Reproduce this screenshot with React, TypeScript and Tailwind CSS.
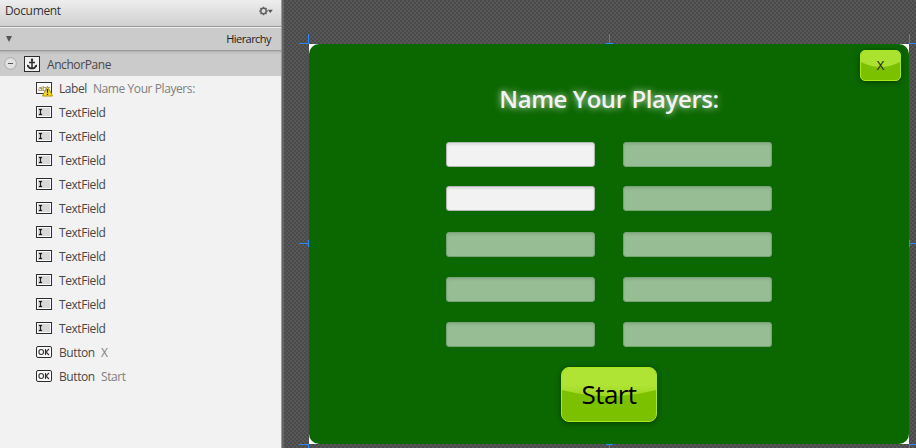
import type { ReactNode } from 'react';

const UI = "font-['Open_Sans','Noto_Sans',sans-serif]";

function AnchorIcon() {
  return (
    <svg width="16" height="16" viewBox="0 0 16 16" className="block">
      <rect x="0.5" y="0.5" width="15" height="15" fill="#f1f1f1" stroke="#2d2d2d" />
      <path d="M8 4V12.5M5 6.5h6M4 9.5c.4 2 1.800 3 4 3s3.600-1 4-3" fill="none" stroke="#2d2d2d" strokeWidth="1.500" />
      <circle cx="8" cy="3.700" r="1.200" fill="#2d2d2d" />
      <path d="M3 11V8.500L5.500 10zM13 11V8.500L10.500 10z" fill="#2d2d2d" />
    </svg>
  );
}

function LabelIcon() {
  return (
    <svg width="18" height="16" viewBox="0 0 18 16" className="block">
      <rect x="0.5" y="1.500" width="15" height="11" fill="#fafafa" stroke="#333" />
      <text x="2" y="10" fontSize="8" fill="#666" fontFamily="Open Sans" textLength="12">abc</text>
      <path d="M11.500 5.300L16.500 15H6.500z" fill="#f7dc20" stroke="#b09510" strokeWidth="1" strokeLinejoin="round" />
      <path d="M11.500 8v3.700M11.500 12.700v1.300" stroke="#302800" strokeWidth="1.300" />
    </svg>
  );
}

function FieldIcon() {
  return (
    <svg width="16" height="12" viewBox="0 0 16 12" className="block">
      <rect x="0.5" y="0.5" width="15" height="11" fill="#f8f8f8" stroke="#2d2d2d" />
      <rect x="2" y="2" width="12" height="8" fill="#d9d9d9" />
      <path d="M3 3h3v1H5v4h1v1H3V8h1V4H3z" fill="#1c1c1c" stroke="#1c1c1c" strokeWidth="0.200" />
    </svg>
  );
}

function ButtonIcon() {
  return (
    <svg width="16" height="12" viewBox="0 0 16 12" className="block">
      <rect x="0.5" y="0.5" width="15" height="11" rx="1.500" fill="#fafafa" stroke="#2d2d2d" />
      <ellipse cx="5.200" cy="6" rx="2.300" ry="2.500" fill="none" stroke="#333" strokeWidth="1.100" />
      <path d="M9.500 3v6M13 3L10 6l3 3" fill="none" stroke="#333" strokeWidth="1.200" />
    </svg>
  );
}

function GearMenu() {
  return (
    <svg width="14" height="10" viewBox="0 0 14 10" className="block">
      <circle cx="4.500" cy="5" r="2.700" fill="none" stroke="#606060" strokeWidth="1.500" />
      <g stroke="#606060" strokeWidth="1.500">
        <path d="M4.500 .7v1.300M4.500 8v1.300M.2 5h1.300M7.500 5h1.300M1.500 2l.9.900M6.600 7.100l.9.900M1.500 8l.9-.9M6.600 2.900l.9-.9" />
      </g>
      <path d="M8.800 3.800h5L11.300 7z" fill="#555" />
    </svg>
  );
}

function Row({ icon, name, detail, nameWidth }: { icon: ReactNode; name: string; detail?: string; nameWidth: string }) {
  return (
    <div className="flex h-6 items-center pl-9">
      <span className="w-[23px] shrink-0 -translate-y-px">{icon}</span>
      <span className={`${nameWidth} whitespace-nowrap text-[#484848]`}>{name}</span>
      {detail && <span className="whitespace-nowrap text-[#808080]">{detail}</span>}
    </div>
  );
}

function GlossButton({ children, className, shine }: { children: ReactNode; className: string; shine: ReactNode }) {
  return (
    <button className={`relative flex items-center justify-center overflow-hidden border border-[#a9e81c] bg-[#7cc100] ${className}`}>
      {shine}
      <span className="relative">{children}</span>
    </button>
  );
}

function Guides() {
  return (
    <svg width="634" height="448" viewBox="282 0 634 448" className="pointer-events-none absolute inset-0">
      <g fill="none" stroke="#2e86ff" strokeWidth="1">
        <path d="M299 43.500h10M308.500 34v10M299 444.500h10M308.500 444v4" />
        <path d="M299 243.500h9M308.500 240v7M606 43.500h7M609.500 34v9M606 444.500h7M609.500 444v4" />
        <path d="M909.500 34v10M909 43.500h7M909.500 448v-4M909 444.500h7M909.500 240v7M910 243.500h6" />
      </g>
    </svg>
  );
}

const rows = [
  { gap: 'mb-[19px]', on: true },
  { gap: 'mb-[21px]', on: true },
  { gap: 'mb-5', on: false },
  { gap: 'mb-5', on: false },
  { gap: 'mb-5', on: false },
];

function Field({ on }: { on: boolean }) {
  return (
    <div
      className={`h-[25px] w-[149px] rounded-[3px] border ${on ? 'border-[#b1b8b1] bg-[#f2f2f2] shadow-[inset_0_2px_2px_#dedede]' : 'border-[#77a377] bg-[#97bd95] shadow-[inset_0_2px_2px_#8bae89]'}`}
    />
  );
}

export default function App() {
  return (
    <div className={`flex h-[448px] w-[916px] overflow-hidden ${UI}`}>
      <aside className="flex w-[282px] shrink-0 flex-col border-r border-[#9a9a9a] bg-[#f2f2f2] text-[12px] tracking-[-0.42px]">
        <header className="flex h-[27px] items-center justify-between border-b border-[#999] bg-linear-to-b from-[#eeeeee] to-[#cfcfcf] pr-2 pb-[5px] pl-[5px] text-[#333]">
          <span className="tracking-[-0.35px]">Document</span>
          <GearMenu />
        </header>
        <div className="flex h-6 items-center justify-between border-b border-[#999] bg-[#cbcbcb] pr-[10px] pl-[6px] text-[#333] shadow-[inset_0_1px_0_#eee]">
          <svg width="6" height="6" viewBox="0 0 6 6"><path d="M0 0h6L3 6z" fill="#555" /></svg>
          <span className="pt-px text-[11px] tracking-[-0.55px] text-[#222]">Hierarchy</span>
        </div>
        <div className="flex h-[25px] items-center bg-[#cbcbcb] pt-[2px] pl-1 text-[#484848] shadow-[inset_0_3px_3px_-2px_#aaa]">
          <svg width="13" height="13" viewBox="0 0 13 13" className="-translate-y-px">
            <circle cx="6.500" cy="6.500" r="5.800" fill="#e2e2e2" stroke="#aaa" />
            <path d="M4 6.500h5" stroke="#555" />
          </svg>
          <span className="ml-[7px] w-[23px] -translate-y-px"><AnchorIcon /></span>
          <span>AnchorPane</span>
        </div>
        <div className="pt-px">
          <Row icon={<span className="block translate-y-px"><LabelIcon /></span>} name="Label" detail="Name Your Players:" nameWidth="w-[34px]" />
          {Array.from({ length: 10 }, (_, i) => (
            <Row key={i} icon={<FieldIcon />} name="TextField" nameWidth="w-[60px]" />
          ))}
          <Row icon={<ButtonIcon />} name="Button" detail="X" nameWidth="w-[42px]" />
          <Row icon={<ButtonIcon />} name="Button" detail="Start" nameWidth="w-[42px]" />
        </div>
      </aside>
      <main className="relative w-[634px] bg-[#505050] bg-[repeating-conic-gradient(#4a4a4a_0_25%,#575757_0_50%)] bg-size-[4px_4px] pt-11 pl-[27px] shadow-[inset_2px_0_1px_#666]">
        <div className="h-[400px] w-[600px] bg-white">
          <section className="flex h-full flex-col items-center rounded-[10px] bg-[#0b6700]">
            <div className="flex w-full justify-end pt-[6px] pr-2">
              <GlossButton
                className="h-[31px] w-[41px] rounded-[5px] text-[13px] text-[#222] shadow-[0_1px_5px_#063c00]"
                shine={<svg className="absolute inset-0" width="39" height="29" viewBox="0 0 39 29"><path d="M0 0h39v11Q19.500 21 0 11z" fill="#abe12f" /></svg>}
              >
                X
              </GlossButton>
            </div>
            <h1 className="h-9 whitespace-nowrap text-[24px] leading-9 font-semibold tracking-[-0.42px] text-[#f2f2f2] [text-shadow:0_0_7px_#d9eed9]">
              Name Your Players:
            </h1>
            <div className="mt-[25px] flex flex-col">
              {rows.map((row, i) => (
                <div key={i} className={`flex gap-7 ${row.gap}`}>
                  <Field on={row.on} />
                  <Field on={false} />
                </div>
              ))}
            </div>
            <GlossButton
              className="h-[55px] w-[96px] rounded-[8px] text-[26px] tracking-[-0.6px] text-black shadow-[0_1px_5px_#063c00]"
              shine={
                <svg className="absolute inset-0" width="94" height="53" viewBox="0 0 94 53">
                  <defs>
                    <linearGradient id="gloss" x1="0" y1="0" x2="0" y2="1">
                      <stop offset="0.600" stopColor="#afe334" />
                      <stop offset="1" stopColor="#9fd722" />
                    </linearGradient>
                  </defs>
                  <path d="M0 0h94v22Q47 34 0 22z" fill="url(#gloss)" />
                </svg>
              }
            >
              Start
            </GlossButton>
          </section>
        </div>
        <Guides />
      </main>
    </div>
  );
}
